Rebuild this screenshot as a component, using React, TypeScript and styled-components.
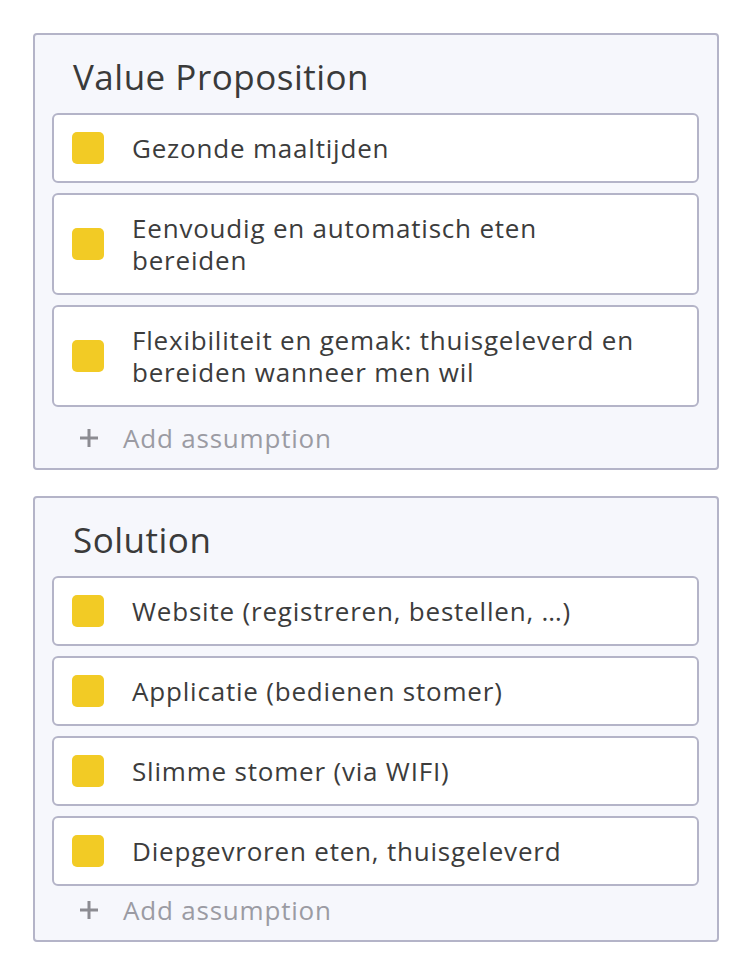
import React from 'react';
import styled, { createGlobalStyle } from 'styled-components';

const sections = [
  {
    title: 'Value Proposition',
    items: [
      'Gezonde maaltijden',
      'Eenvoudig en automatisch eten bereiden',
      'Flexibiliteit en gemak: thuisgeleverd en bereiden wanneer men wil',
    ],
    addGap: 7,
  },
  {
    title: 'Solution',
    items: [
      'Website (registreren, bestellen, …)',
      'Applicatie (bedienen stomer)',
      'Slimme stomer (via WIFI)',
      'Diepgevroren eten, thuisgeleverd',
    ],
    addGap: 0,
  },
];

const GlobalStyle = createGlobalStyle`
  body {
    margin: 0;
    background: #ffffff;
    font-family: "Open Sans", Lato, sans-serif;
  }
`;

export default function App() {
  return (
    <>
      <GlobalStyle />
      <Page>
        {sections.map((s) => (
          <Card key={s.title}>
            <Title>{s.title}</Title>
            <List>
              {s.items.map((item) => (
                <Item key={item}>
                  <Check />
                  <ItemText>{item}</ItemText>
                </Item>
              ))}
            </List>
            <AddRow $gap={s.addGap}>
              <PlusIcon viewBox="0 0 20 20">
                <path d="M10 1v18M1 10h18" />
              </PlusIcon>
              <AddText>Add assumption</AddText>
            </AddRow>
          </Card>
        ))}
      </Page>
    </>
  );
}

const Page = styled.div`
  padding: 33px 33px;
  display: flex;
  flex-direction: column;
  gap: 26px;
  width: 686px;
`;

const Card = styled.section`
  background: #f6f7fc;
  border: 2px solid #b4b4c8;
  border-radius: 4px;
  padding: 0 18px 6px 17px;
`;

const Title = styled.h2`
  margin: 0 0 16px;
  padding: 22px 0 0 21px;
  font-size: 35px;
  line-height: 40px;
  letter-spacing: 0.5px;
  font-weight: 400;
  color: #3a3a3a;
`;

const List = styled.div`
  display: flex;
  flex-direction: column;
  gap: 10px;
`;

const Item = styled.div`
  display: flex;
  align-items: center;
  gap: 28px;
  padding: 17px 50px 17px 18px;
  background: #ffffff;
  border: 2px solid #b4b4c8;
  border-radius: 6px;
`;

const Check = styled.span`
  flex: none;
  width: 32px;
  height: 32px;
  border-radius: 5px;
  background: #f2cb25;
`;

const ItemText = styled.span`
  font-size: 26px;
  line-height: 32px;
  letter-spacing: 0.8px;
  color: #3c3c3c;
`;

const AddRow = styled.div<{ $gap: number }>`
  display: flex;
  align-items: center;
  gap: 24px;
  height: 48px;
  margin-top: ${(p) => p.$gap}px;
  padding-left: 27px;
`;

const PlusIcon = styled.svg`
  width: 20px;
  height: 20px;
  stroke: #8c8c92;
  stroke-width: 3;
  fill: none;
`;

const AddText = styled.span`
  font-size: 26px;
  letter-spacing: 0.8px;
  color: #9b9ba3;
`;
